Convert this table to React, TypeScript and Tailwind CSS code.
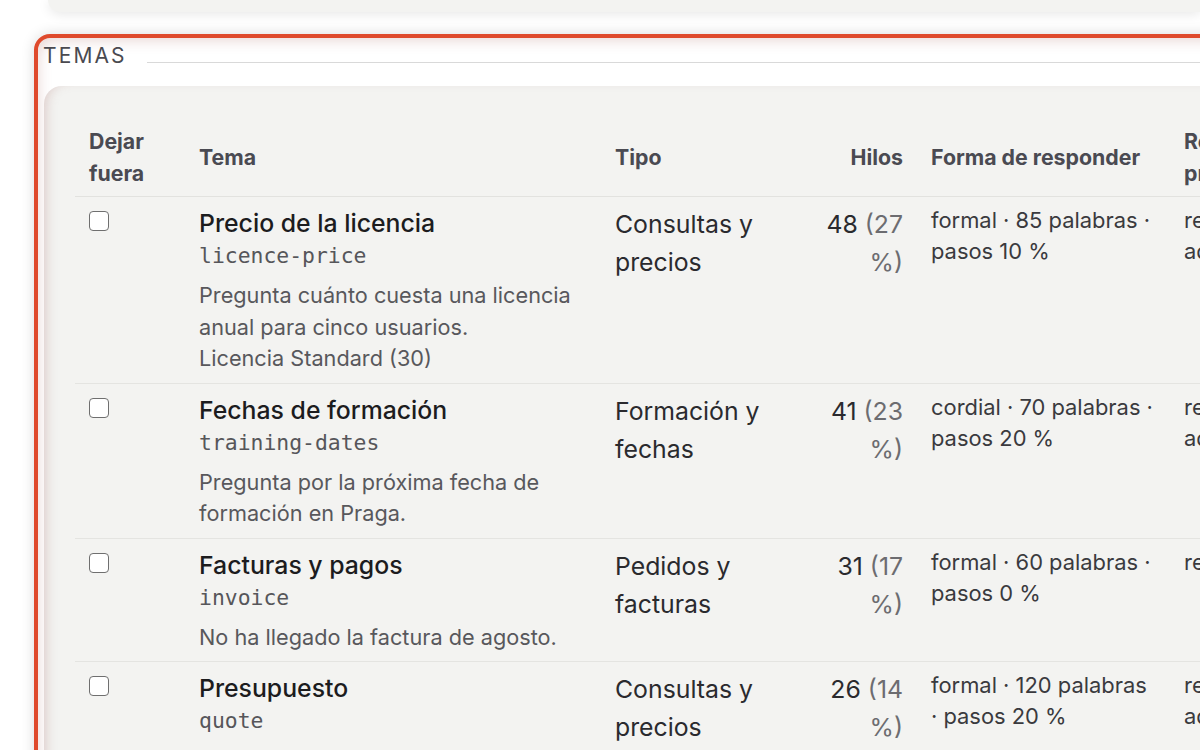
import React from "react";

type Row = {
  title: string;
  slug: string;
  desc: string[];
  tipo: string;
  n: number;
  pct: number;
  forma: string;
  last: string[];
};

const rows: Row[] = [
  {
    title: "Precio de la licencia",
    slug: "licence-price",
    desc: ["Pregunta cuánto cuesta una licencia anual para cinco usuarios.", "Licencia Standard (30)"],
    tipo: "Consultas y precios",
    n: 48,
    pct: 27,
    forma: "formal · 85 palabras · pasos 10 %",
    last: ["responder", "adjuntar"],
  },
  {
    title: "Fechas de formación",
    slug: "training-dates",
    desc: ["Pregunta por la próxima fecha de formación en Praga."],
    tipo: "Formación y fechas",
    n: 41,
    pct: 23,
    forma: "cordial · 70 palabras · pasos 20 %",
    last: ["responder", "adjuntar"],
  },
  {
    title: "Facturas y pagos",
    slug: "invoice",
    desc: ["No ha llegado la factura de agosto."],
    tipo: "Pedidos y facturas",
    n: 31,
    pct: 17,
    forma: "formal · 60 palabras · pasos 0 %",
    last: ["reenviar"],
  },
  {
    title: "Presupuesto",
    slug: "quote",
    desc: [],
    tipo: "Consultas y precios",
    n: 26,
    pct: 14,
    forma: "formal · 120 palabras · pasos 20 %",
    last: ["responder", "adjuntar"],
  },
];

const mono = { fontFamily: '"DejaVu Sans Mono", "Liberation Mono", monospace' };

export default function App() {
  return (
    <div
      className="w-[1200px] h-[750px] bg-white overflow-hidden"
      style={{ fontFamily: 'Inter, "Noto Sans", sans-serif' }}
    >
      {/* top card remnant */}
      <div className="ml-[48px] h-[12px] bg-[#f3f3f1] rounded-bl-[18px] shadow-[0_2px_12px_rgba(0,0,0,0.10)]" />

      {/* section */}
      <div className="mt-[22px] ml-[34px] w-[1300px] h-[760px] border-4 border-[#df4a2c] rounded-tl-[16px] bg-white overflow-hidden shadow-[0_0_14px_rgba(0,0,0,0.14),inset_4px_6px_14px_-4px_rgba(170,100,95,0.28)]">
        <div className="flex items-start pl-[5px] pt-[5px]">
          <div className="text-[21px] leading-[26px] tracking-[0.1em] text-[#4a4a50]">TEMAS</div>
          <div className="ml-[20px] mt-[19px] flex-1 border-t border-[#d9d9d9]" />
        </div>

        <div className="mt-[17px] ml-[6px] bg-[#f3f3f1] rounded-tl-[18px] pt-[28px] pl-[31px] h-[700px] shadow-[inset_8px_0_12px_-6px_rgba(170,110,105,0.30)]">
          <table className="table-fixed border-collapse w-[1295px] text-left">
            <colgroup>
              <col className="w-[110px]" />
              <col className="w-[416px]" />
              <col className="w-[188px]" />
              <col className="w-[128px]" />
              <col className="w-[253px]" />
              <col className="w-[200px]" />
            </colgroup>
            <thead>
              <tr className="border-b border-[#e2e2df]">
                {[
                  ["Dejar", "fuera"],
                  ["Tema"],
                  ["Tipo"],
                  ["Hilos"],
                  ["Forma de responder"],
                  ["Respuesta", "preferida"],
                ].map((h, i) => (
                  <th
                    key={i}
                    className={`px-[14px] pt-[12px] pb-[7px] align-middle text-[21.3px] leading-[31.5px] font-bold text-[#4a4a52] ${
                      i === 3 ? "text-right" : "text-left"
                    }`}
                  >
                    {h.map((l, j) => (
                      <div key={j} className="whitespace-nowrap">
                        {l}
                      </div>
                    ))}
                  </th>
                ))}
              </tr>
            </thead>
            <tbody>
              {rows.map((r, i) => (
                <tr key={i} className="border-b border-[#e4e4e1]">
                  <td className="px-[14px] pt-[8px] pb-[8px] align-top">
                    <div className="mt-[6px] w-[20px] h-[20px] rounded-[4px] border-[1.5px] border-[#6f6f6f] bg-white" />
                  </td>
                  <td className="px-[14px] pt-[8px] pb-[8px] align-top">
                    <div className="text-[24.8px] leading-[36px] font-medium text-[#1c1c1e]">{r.title}</div>
                    <div className="text-[21.4px] leading-[30px] text-[#56565a]" style={mono}>
                      {r.slug}
                    </div>
                    {r.desc.length > 0 && (
                      <div className="mt-[9px] text-[21.7px] leading-[31.5px] text-[#58585c]">
                        {r.desc.map((d, j) => (
                          <div key={j}>{d}</div>
                        ))}
                      </div>
                    )}
                  </td>
                  <td className="px-[14px] pt-[8px] pb-[8px] align-top text-[24.8px] leading-[38px] text-[#2a2a2e]">
                    {r.tipo}
                  </td>
                  <td className="px-[14px] pt-[8px] pb-[8px] align-top text-right text-[24.8px] leading-[38px] text-[#2a2a2e]">
                    {r.n} <span className="text-[#6c6c70]">({r.pct} %)</span>
                  </td>
                  <td className="px-[14px] pt-[8px] pb-[8px] align-top text-[21.9px] leading-[31px] text-[#3a3a3e]">
                    {r.forma}
                  </td>
                  <td className="px-[14px] pt-[8px] pb-[8px] align-top text-[21.9px] leading-[31px] text-[#3a3a3e]">
                    {r.last.map((l, j) => (
                      <div key={j} className="whitespace-nowrap">
                        {l}
                      </div>
                    ))}
                  </td>
                </tr>
              ))}
            </tbody>
          </table>
        </div>
      </div>
    </div>
  );
}
